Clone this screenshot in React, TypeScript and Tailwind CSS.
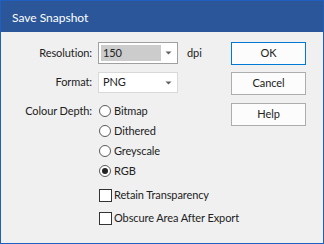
import React from "react";

const Arrow = () => (
  <svg width="7" height="4" viewBox="0 0 7 4" className="block">
    <path d="M0.5 0.5 H6.5 L3.5 3.5 Z" fill="#606060" />
  </svg>
);

const Radio = ({ label, checked }: { label: string; checked?: boolean }) => (
  <div className="flex items-center h-[20px]">
    <div className="w-[12px] h-[12px] shrink-0 rounded-full border border-[#5a5a5a] bg-white flex items-center justify-center">
      {checked && <div className="w-[6px] h-[6px] rounded-full bg-[#222]" />}
    </div>
    <span className="ml-[3px]">{label}</span>
  </div>
);

const Check = ({ label }: { label: string }) => (
  <div className="flex items-center h-[20px]">
    <div className="w-[13px] h-[13px] shrink-0 border border-[#333] bg-white" />
    <span className="ml-[2px]">{label}</span>
  </div>
);

export default function App() {
  return (
    <div
      className="w-[324px] h-[244px] flex flex-col bg-[#1f5fbf] text-[11px] text-[#222] whitespace-nowrap tracking-[-0.1px]"
      style={{ fontFamily: "Lato, 'Liberation Sans', sans-serif" }}
    >
      <div className="h-[31px] mx-[1px] mt-[1px] bg-[#2b579a] text-white text-[12px] tracking-normal flex items-center pl-[11px] pt-[3px] shrink-0">
        Save Snapshot
      </div>
      <div className="flex-1 mx-[1px] mb-[1px] bg-[#f0f0f0] flex">
        <div className="flex-1 min-w-0 flex flex-col pt-[10px]">
          <div className="flex items-center h-[22px]">
            <div className="w-[92px] shrink-0 text-right pr-[1px]">Resolution:</div>
            <div className="ml-[5px] w-[80px] shrink-0 h-[22px] border border-[#a0a0a0] bg-white flex items-center p-[2px]">
              <div className="w-[60px] h-full bg-[#cccccc] flex items-center pl-[2px]">150</div>
              <div className="flex-1 flex justify-center">
                <Arrow />
              </div>
            </div>
            <span className="ml-[9px]">dpi</span>
          </div>
          <div className="flex items-center h-[21px] mt-[8px]">
            <div className="w-[92px] shrink-0 text-right pr-[1px]">Format:</div>
            <div className="ml-[5px] w-[80px] shrink-0 h-[21px] border border-[#d9d9d9] bg-white flex items-center p-[2px]">
              <div className="w-[60px] h-full flex items-center pl-[2px]">PNG</div>
              <div className="flex-1 flex justify-center">
                <Arrow />
              </div>
            </div>
          </div>
          <div className="flex mt-[8px]">
            <div className="w-[92px] shrink-0 text-right pr-[1px] h-[20px] leading-[20px]">Colour Depth:</div>
            <div className="ml-[6px] flex flex-col">
              <Radio label="Bitmap" />
              <Radio label="Dithered" />
              <Radio label="Greyscale" />
              <Radio label="RGB" checked />
              <div className="mt-[4px]">
                <Check label="Retain Transparency" />
              </div>
              <div className="mt-[3px]">
                <Check label="Obscure Area After Export" />
              </div>
            </div>
          </div>
        </div>
        <div className="w-[75px] shrink-0 mr-[17px] flex flex-col pt-[10px]">
          <button className="h-[23px] border border-[#0078d7] bg-[#fcfcfc]">OK</button>
          <button className="h-[23px] mt-[7px] border border-[#adadad] bg-[#fcfcfc]">Cancel</button>
          <button className="h-[23px] mt-[8px] border border-[#adadad] bg-[#fcfcfc]">Help</button>
        </div>
      </div>
    </div>
  );
}
